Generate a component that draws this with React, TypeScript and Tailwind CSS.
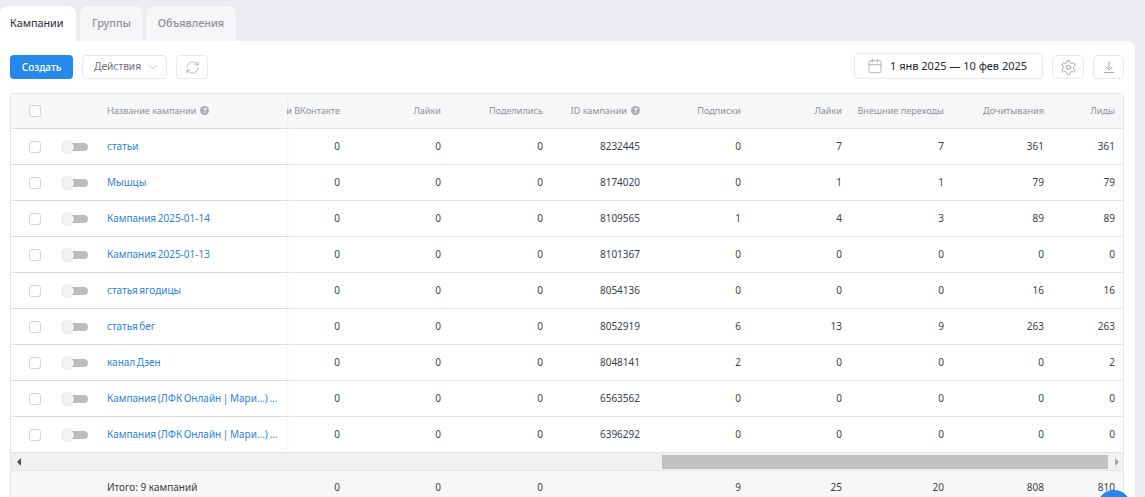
import { Calendar, ChevronDown, RefreshCw, Settings } from "lucide-react";

const columns = [
  { title: "и ВКонтакте", width: "w-[61px]" },
  { title: "Лайки", width: "w-[101px]" },
  { title: "Поделились", width: "w-[102px]" },
  { title: "ID кампании", width: "w-[97px]", help: true },
  { title: "Подписки", width: "w-[101px]" },
  { title: "Лайки", width: "w-[101px]" },
  { title: "Внешние переходы", width: "w-[102px]" },
  { title: "Дочитывания", width: "w-[100px]" },
  { title: "Лиды", width: "w-[71px]" },
];

const rows = [
  { name: "статьи", values: [0, 0, 0, 8232445, 0, 7, 7, 361, 361] },
  { name: "Мышцы", values: [0, 0, 0, 8174020, 0, 1, 1, 79, 79] },
  { name: "Кампания 2025-01-14", values: [0, 0, 0, 8109565, 1, 4, 3, 89, 89] },
  { name: "Кампания 2025-01-13", values: [0, 0, 0, 8101367, 0, 0, 0, 0, 0] },
  { name: "статья ягодицы", values: [0, 0, 0, 8054136, 0, 0, 0, 16, 16] },
  { name: "статья бег", values: [0, 0, 0, 8052919, 6, 13, 9, 263, 263] },
  { name: "канал Дзен", values: [0, 0, 0, 8048141, 2, 0, 0, 0, 2] },
  { name: "Кампания (ЛФК Онлайн | Мари…) ...", values: [0, 0, 0, 6563562, 0, 0, 0, 0, 0] },
  { name: "Кампания (ЛФК Онлайн | Мари…) ...", values: [0, 0, 0, 6396292, 0, 0, 0, 0, 0] },
];

const totals = ["0", "0", "0", "", "9", "25", "20", "808", "810"];

function HelpDot() {
  return (
    <span className="ml-[4px] inline-flex h-[9px] w-[9px] shrink-0 items-center justify-center rounded-full bg-[#a9aeb4] text-[7px] font-bold leading-none text-white">
      ?
    </span>
  );
}

function Checkbox() {
  return <span className="h-[12px] w-[12px] shrink-0 rounded-[3px] border-[1.5px] border-[#cfd3da] bg-white" />;
}

function Toggle() {
  return (
    <span className="relative block h-[8px] w-[26px] rounded-full bg-[#bdbdbd]">
      <span className="absolute left-0 top-[-2px] h-[12px] w-[12px] rounded-full bg-[#f3f3f5] shadow-[0_0_2px_rgba(0,0,0,0.25)]" />
    </span>
  );
}

export default function App() {
  return (
    <div className="relative h-[497px] w-[1145px] overflow-hidden bg-[#ebecf1] pt-[6px] font-['Noto_Sans','Open_Sans',sans-serif] text-[10px] text-[#3a3f47]">
      <div className="flex text-[10.8px]">
        <div className="flex h-[35px] w-[76px] items-center rounded-t-[8px] bg-white pl-[10px] text-[#1f2937]">Кампании</div>
        <div className="ml-[4px] flex h-[35px] w-[63px] items-center justify-center rounded-t-[8px] bg-[#f6f6f8] font-medium text-[#8b9098]">Группы</div>
        <div className="ml-[3px] flex h-[35px] w-[90px] items-center justify-center rounded-t-[8px] bg-[#f6f6f8] font-medium text-[#8b9098]">Объявления</div>
      </div>

      <div className="h-[456px] w-[1135px] rounded-tr-[8px] bg-white pl-[10px] pr-[11px] pt-[12px]">
        <div className="flex h-[28px] items-center">
          <button className="flex h-[24px] w-[63px] items-center justify-center rounded-[4px] bg-[#2688eb] text-[10px] font-medium text-white">
            Создать
          </button>
          <button className="ml-[9px] flex h-[24px] w-[85px] items-center justify-between rounded-[4px] border border-[#e7e8ec] pl-[11px] pr-[6px] text-[10.2px] text-[#6d7178]">
            Действия
            <ChevronDown size={14} strokeWidth={1} className="text-[#9ca0a6]" />
          </button>
          <button className="ml-[9px] flex h-[24px] w-[32px] items-center justify-center rounded-[4px] border border-[#e7e8ec] text-[#a0a4a9]">
            <RefreshCw size={15} strokeWidth={1.2} />
          </button>
          <div className="flex-1" />
          <button className="mb-[2px] flex h-[26px] w-[189px] items-center rounded-[5px] border border-[#e7e8ec] pl-[12px] text-[11px] text-[#23272e]">
            <Calendar size={16} strokeWidth={1.2} className="mr-[7px] text-[#a0a5ab]" />
            1 янв 2025 — 10 фев 2025
          </button>
          <button className="ml-[9px] flex h-[24px] w-[32px] items-center justify-center rounded-[5px] border border-[#e7e8ec] text-[#8f9399]">
            <Settings size={17} strokeWidth={1.2} />
          </button>
          <button className="ml-[9px] flex h-[24px] w-[31px] items-center justify-center rounded-[5px] border border-[#e7e8ec] text-[#a5a9ae]">
            <svg width="14" height="14" viewBox="0 0 14 14" fill="none" stroke="currentColor" strokeWidth="1">
              <path d="M7 1v8.5M3.5 6.5 7 10l3.5-3.5M2 12.5h10" />
            </svg>
          </button>
        </div>

        <div className="mt-[12px] overflow-hidden rounded-t-[4px] border-x border-t border-[#e3e4e8]">
          <div className="flex h-[35px] items-center border-b border-[#e3e4e8] bg-[#f7f7f8] text-[9.15px] text-[#8b929b]">
            <div className="relative z-10 flex h-full w-[276px] shrink-0 items-center bg-[#f7f7f8] shadow-[1px_0_2px_rgba(0,0,0,0.05)]">
              <span className="ml-[18px] flex w-[78px]"><Checkbox /></span>
              <span className="flex items-center">Название кампании<HelpDot /></span>
            </div>
            {columns.map((c, i) => (
              <div key={i} className={`${c.width} ${i === 0 ? "ml-[1px]" : ""} flex shrink-0 items-center justify-end whitespace-nowrap pr-[9px]`}>
                {c.title}
                {c.help && <HelpDot />}
              </div>
            ))}
          </div>

          {rows.map((r, i) => (
            <div key={i} className="flex h-[36px] items-center border-b border-[#e3e4e8] text-[10px] text-[#3a3f47]">
              <div className="flex h-full w-[276px] shrink-0 items-center shadow-[1px_0_2px_rgba(0,0,0,0.05)]">
                <span className="ml-[18px] flex w-[33px]"><Checkbox /></span>
                <span className="w-[45px]"><Toggle /></span>
                <span className="whitespace-nowrap text-[#2d81e0] [word-spacing:-1px]">{r.name}</span>
              </div>
              {r.values.map((v, j) => (
                <div key={j} className={`${columns[j].width} ${j === 0 ? "ml-[1px]" : ""} shrink-0 pr-[9px] text-right`}>
                  {v}
                </div>
              ))}
            </div>
          ))}

          <div className="flex h-[18px] items-center border-b border-[#e3e4e8] bg-[#f1f1f1] text-[#505050]">
            <span className="ml-[6px] h-0 w-0 border-y-[4px] border-r-[4px] border-y-transparent border-r-[#505050]" />
            <div className="ml-[641px] h-[14px] w-[446px] bg-[#c1c1c1]" />
            <span className="ml-[7px] h-0 w-0 border-y-[4px] border-l-[4px] border-y-transparent border-l-[#a3a3a3]" />
          </div>

          <div className="flex h-[34px] items-center bg-[#f7f7f8] pb-[2px] text-[10px] text-[#3a3f47]">
            <div className="w-[277px] shrink-0 pl-[96px]">Итого: 9 кампаний</div>
            {totals.map((t, i) => (
              <div key={i} className={`${columns[i].width} shrink-0 pr-[9px] text-right`}>
                {t}
              </div>
            ))}
          </div>
        </div>
      </div>

      <div className="absolute left-[1097px] top-[490px] h-[34px] w-[34px] rounded-full bg-[#2688eb]" />
    </div>
  );
}
